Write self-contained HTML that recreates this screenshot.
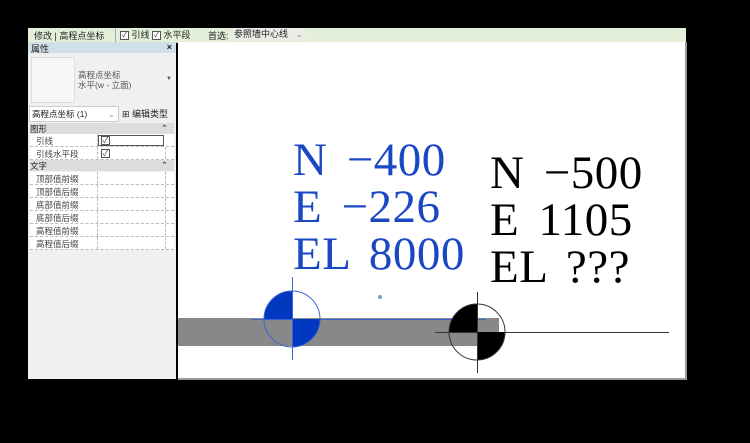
<!DOCTYPE html>
<html><head><meta charset="utf-8"><style>
body{margin:0;width:750px;height:443px;background:#000;position:relative;overflow:hidden;font-family:"Liberation Sans","Noto Sans CJK SC",sans-serif;font-size:9px;color:#222}
.a{position:absolute;white-space:nowrap}
.tb{left:28px;top:28px;width:658px;height:14px;background:#e3efd9;border-bottom:1px solid #b8c8aa}
.lp{left:28px;top:42px;width:148px;height:337px;background:#f0f0f0}
.cv{left:178px;top:42px;width:507px;height:336px;background:#fff;border-right:2px solid #999;border-bottom:2px solid #999}
.row{position:absolute;left:2px;width:144px;height:12px;border-bottom:1px dashed #bbb;background:#fff}
.row span{position:absolute;left:6px;top:1px;font-size:8.5px;color:#444}
.row i{position:absolute;left:67px;top:0;width:1px;height:12px;border-left:1px dashed #bbb}
.row b{position:absolute;left:135px;top:0;height:12px;border-left:1px dashed #bbb}
.hd{position:absolute;left:2px;width:144px;height:11px;background:#ddd;font-size:8.5px}
.t{font-family:"Liberation Serif",serif;font-size:47px;line-height:47px;white-space:pre;word-spacing:7px;letter-spacing:0.5px}
.cb{display:inline-block;width:7px;height:7px;border:1px solid #555;background:#fff;font-size:7px;line-height:7px;text-align:center;vertical-align:middle}
</style></head><body>
<div class="a tb">
 <span class="a" style="left:6px;top:1px">修改 | 高程点坐标</span>
 <span class="a" style="left:87px;top:0;height:14px;border-left:1px solid #aaa"></span>
 <span class="a" style="left:92px;top:1px;line-height:12px"><span class="cb">✓</span> 引线 <span class="cb">✓</span> 水平段</span>
 <span class="a" style="left:180px;top:1px">首选:</span>
 <span class="a" style="left:204px;top:0;width:72px;height:13px;background:#e9ede6;padding-left:2px;line-height:13px">参照墙中心线 <span style="position:absolute;right:3px;color:#888">⌄</span></span>
</div>
<div class="a lp">
 <div class="a" style="left:0;top:0;width:148px;height:11px;background:#cfe0ea"><span style="position:absolute;left:3px;top:0">属性</span><span style="position:absolute;right:4px;top:0;font-weight:bold">×</span></div>
 <div class="a" style="left:3px;top:15px;width:42px;height:44px;background:#f7f7f7;border:1px solid #ddd"></div>
 <div class="a" style="left:50px;top:28px;font-size:8.5px;color:#555;line-height:10px">高程点坐标<br>水平(w - 立面)</div>
 <div class="a" style="left:138px;top:34px;font-size:6px;color:#555">▼</div>
 <div class="a" style="left:1px;top:64px;width:86px;height:14px;background:#fff;border:1px solid #ccc;font-size:8.5px;line-height:14px;padding-left:2px">高程点坐标 (1) <span style="position:absolute;right:3px;color:#999">⌄</span></div>
 <div class="a" style="left:94px;top:65px;font-size:9px">⊞ 编辑类型</div>
 <div class="hd" style="top:81px">图形<span style="float:right;margin-right:6px">⌃</span></div>
 <div class="row" style="top:92px"><span>引线</span><i></i><div class="a" style="left:68px;top:1px;width:64px;height:9px;border:1px solid #555"></div><span style="left:71px;top:2px" class="cb">✓</span></div>
 <div class="row" style="top:105px"><span>引线水平段</span><i></i><b></b><span style="left:71px;top:2px" class="cb">✓</span></div>
 <div class="hd" style="top:118px">文字<span style="float:right;margin-right:6px">⌃</span></div>
 <div class="row" style="top:130px"><span>顶部值前缀</span><i></i><b></b></div>
 <div class="row" style="top:143px"><span>顶部值后缀</span><i></i><b></b></div>
 <div class="row" style="top:156px"><span>底部值前缀</span><i></i><b></b></div>
 <div class="row" style="top:169px"><span>底部值后缀</span><i></i><b></b></div>
 <div class="row" style="top:182px"><span>高程值前缀</span><i></i><b></b></div>
 <div class="row" style="top:195px"><span>高程值后缀</span><i></i><b></b></div>
</div>
<div class="a cv"></div>
<div class="a t" style="left:293px;top:137px;color:#1a47c4">N −400
E −226
EL 8000</div>
<div class="a t" style="left:490px;top:150px;color:#000">N −500
E 1105
EL ???</div>
<svg class="a" style="left:0;top:0" width="750" height="443">
 <rect x="178" y="318" width="321" height="28" fill="#888"/>
 <line x1="251" y1="319.5" x2="486" y2="319.5" stroke="#3a62d0" stroke-width="1"/>
 <line x1="435" y1="332.5" x2="669" y2="332.5" stroke="#333" stroke-width="1"/>
 <path d="M292 319 L264 319 A28 28 0 0 1 292 291 Z" fill="#0038c0"/>
 <path d="M292 319 L320 319 A28 28 0 0 1 292 347 Z" fill="#0038c0"/>
 <circle cx="292" cy="319" r="28" fill="none" stroke="#3a62d0"/>
 <line x1="292.5" y1="277" x2="292.5" y2="360" stroke="#3a62d0"/>
 <path d="M477 332 L449 332 A28 28 0 0 1 477 304 Z" fill="#000"/>
 <path d="M477 332 L505 332 A28 28 0 0 1 477 360 Z" fill="#000"/>
 <circle cx="477" cy="332" r="28" fill="none" stroke="#333"/>
 <line x1="477.5" y1="292" x2="477.5" y2="373" stroke="#333"/>
 <circle cx="380" cy="297" r="2" fill="#7a9ad8"/>
</svg>
</body></html>
